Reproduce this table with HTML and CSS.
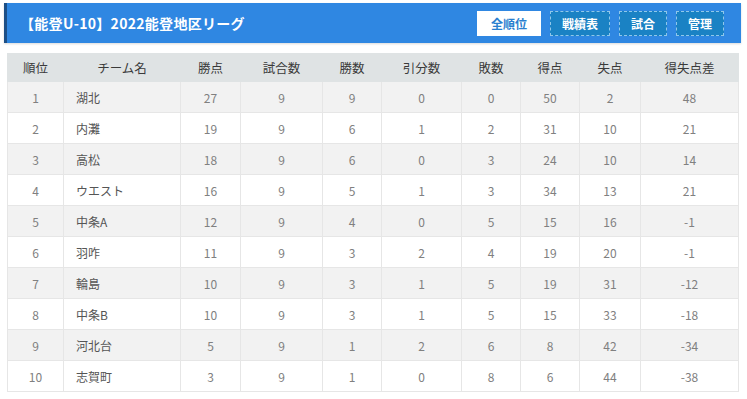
FILE: index.html
```html
<!DOCTYPE html>
<html lang="ja">
<head>
<meta charset="utf-8">
<link rel="stylesheet" href="styles.css">
</head>
<body>
<div class="page">
  <header class="bar">
    <h1 class="title">【能登U-10】2022能登地区リーグ</h1>
    <nav class="tabs">
      <span class="tab tab-active">全順位</span>
      <span class="tab">戦績表</span>
      <span class="tab">試合</span>
      <span class="tab">管理</span>
    </nav>
  </header>
  <table class="standings">
    <colgroup>
      <col class="c-rank"><col class="c-team"><col class="c-pts"><col class="c-gp"><col class="c-w"><col class="c-d"><col class="c-l"><col class="c-gf"><col class="c-ga"><col class="c-gd">
    </colgroup>
    <thead>
      <tr><th>順位</th><th>チーム名</th><th>勝点</th><th>試合数</th><th>勝数</th><th>引分数</th><th>敗数</th><th>得点</th><th>失点</th><th>得失点差</th></tr>
    </thead>
    <tbody>
      <tr><td>1</td><td class="team">湖北</td><td>27</td><td>9</td><td>9</td><td>0</td><td>0</td><td>50</td><td>2</td><td>48</td></tr>
      <tr><td>2</td><td class="team">内灘</td><td>19</td><td>9</td><td>6</td><td>1</td><td>2</td><td>31</td><td>10</td><td>21</td></tr>
      <tr><td>3</td><td class="team">高松</td><td>18</td><td>9</td><td>6</td><td>0</td><td>3</td><td>24</td><td>10</td><td>14</td></tr>
      <tr><td>4</td><td class="team">ウエスト</td><td>16</td><td>9</td><td>5</td><td>1</td><td>3</td><td>34</td><td>13</td><td>21</td></tr>
      <tr><td>5</td><td class="team">中条A</td><td>12</td><td>9</td><td>4</td><td>0</td><td>5</td><td>15</td><td>16</td><td>-1</td></tr>
      <tr><td>6</td><td class="team">羽咋</td><td>11</td><td>9</td><td>3</td><td>2</td><td>4</td><td>19</td><td>20</td><td>-1</td></tr>
      <tr><td>7</td><td class="team">輪島</td><td>10</td><td>9</td><td>3</td><td>1</td><td>5</td><td>19</td><td>31</td><td>-12</td></tr>
      <tr><td>8</td><td class="team">中条B</td><td>10</td><td>9</td><td>3</td><td>1</td><td>5</td><td>15</td><td>33</td><td>-18</td></tr>
      <tr><td>9</td><td class="team">河北台</td><td>5</td><td>9</td><td>1</td><td>2</td><td>6</td><td>8</td><td>42</td><td>-34</td></tr>
      <tr><td>10</td><td class="team">志賀町</td><td>3</td><td>9</td><td>1</td><td>0</td><td>8</td><td>6</td><td>44</td><td>-38</td></tr>
    </tbody>
  </table>
</div>
</body>
</html>
```
FILE: styles.css
```css
html, body {
  margin: 0;
  padding: 0;
  background: #ffffff;
}
body {
  font-family: "Noto Sans CJK JP", "Noto Sans", sans-serif;
  color: #666;
}
.page {
  padding: 3px 6px 0 4px;
}
.bar {
  display: flex;
  align-items: center;
  justify-content: space-between;
  height: 40px;
  background: #2f87e2;
  border-left: 3px solid #1d4f86;
  box-shadow: 0 1px 2px rgba(0,0,0,0.15);
  padding: 0 17px 0 13px;
}
.title {
  margin: 0;
  font-size: 14px;
  font-weight: bold;
  color: #fff;
  letter-spacing: 0.3px;
}
.tabs {
  display: flex;
  gap: 9px;
}
.tab {
  display: flex;
  align-items: center;
  justify-content: center;
  height: 25px;
  box-sizing: border-box;
  padding: 0 11px;
  font-size: 12px;
  font-weight: bold;
  color: #fff;
  background: #1a82c4;
  border: 1px dashed #8fc7ea;
}
.tab-active {
  background: #fff;
  color: #2a7fcf;
  border: 1px solid #fff;
  padding: 0 13px;
}
.standings {
  margin: 10px 0 0 3px;
  width: 731px;
  border-collapse: collapse;
  table-layout: fixed;
  font-size: 12px;
}
.c-rank { width: 56px; }
.c-team { width: 117px; }
.c-pts { width: 60px; }
.c-gp { width: 82px; }
.c-w { width: 59px; }
.c-d { width: 80px; }
.c-l { width: 59px; }
.c-gf { width: 59px; }
.c-ga { width: 61px; }
.c-gd { width: 98px; }
.standings th {
  height: 27px;
  padding: 0;
  background: #dfe3e4;
  color: #3a3a3a;
  font-weight: normal;
  font-size: 12.5px;
  border: 1px solid #dfe3e4;
  text-align: center;
}
.standings td {
  height: 30px;
  padding: 0;
  text-align: center;
  border: 1px solid #e6e6e6;
  color: #808080;
}
.standings td.team {
  text-align: left;
  padding-left: 12px;
  color: #555;
}
.standings tbody tr:nth-child(odd) td {
  background: #f2f2f2;
}
.standings tbody tr:nth-child(even) td {
  background: #fff;
}
```
